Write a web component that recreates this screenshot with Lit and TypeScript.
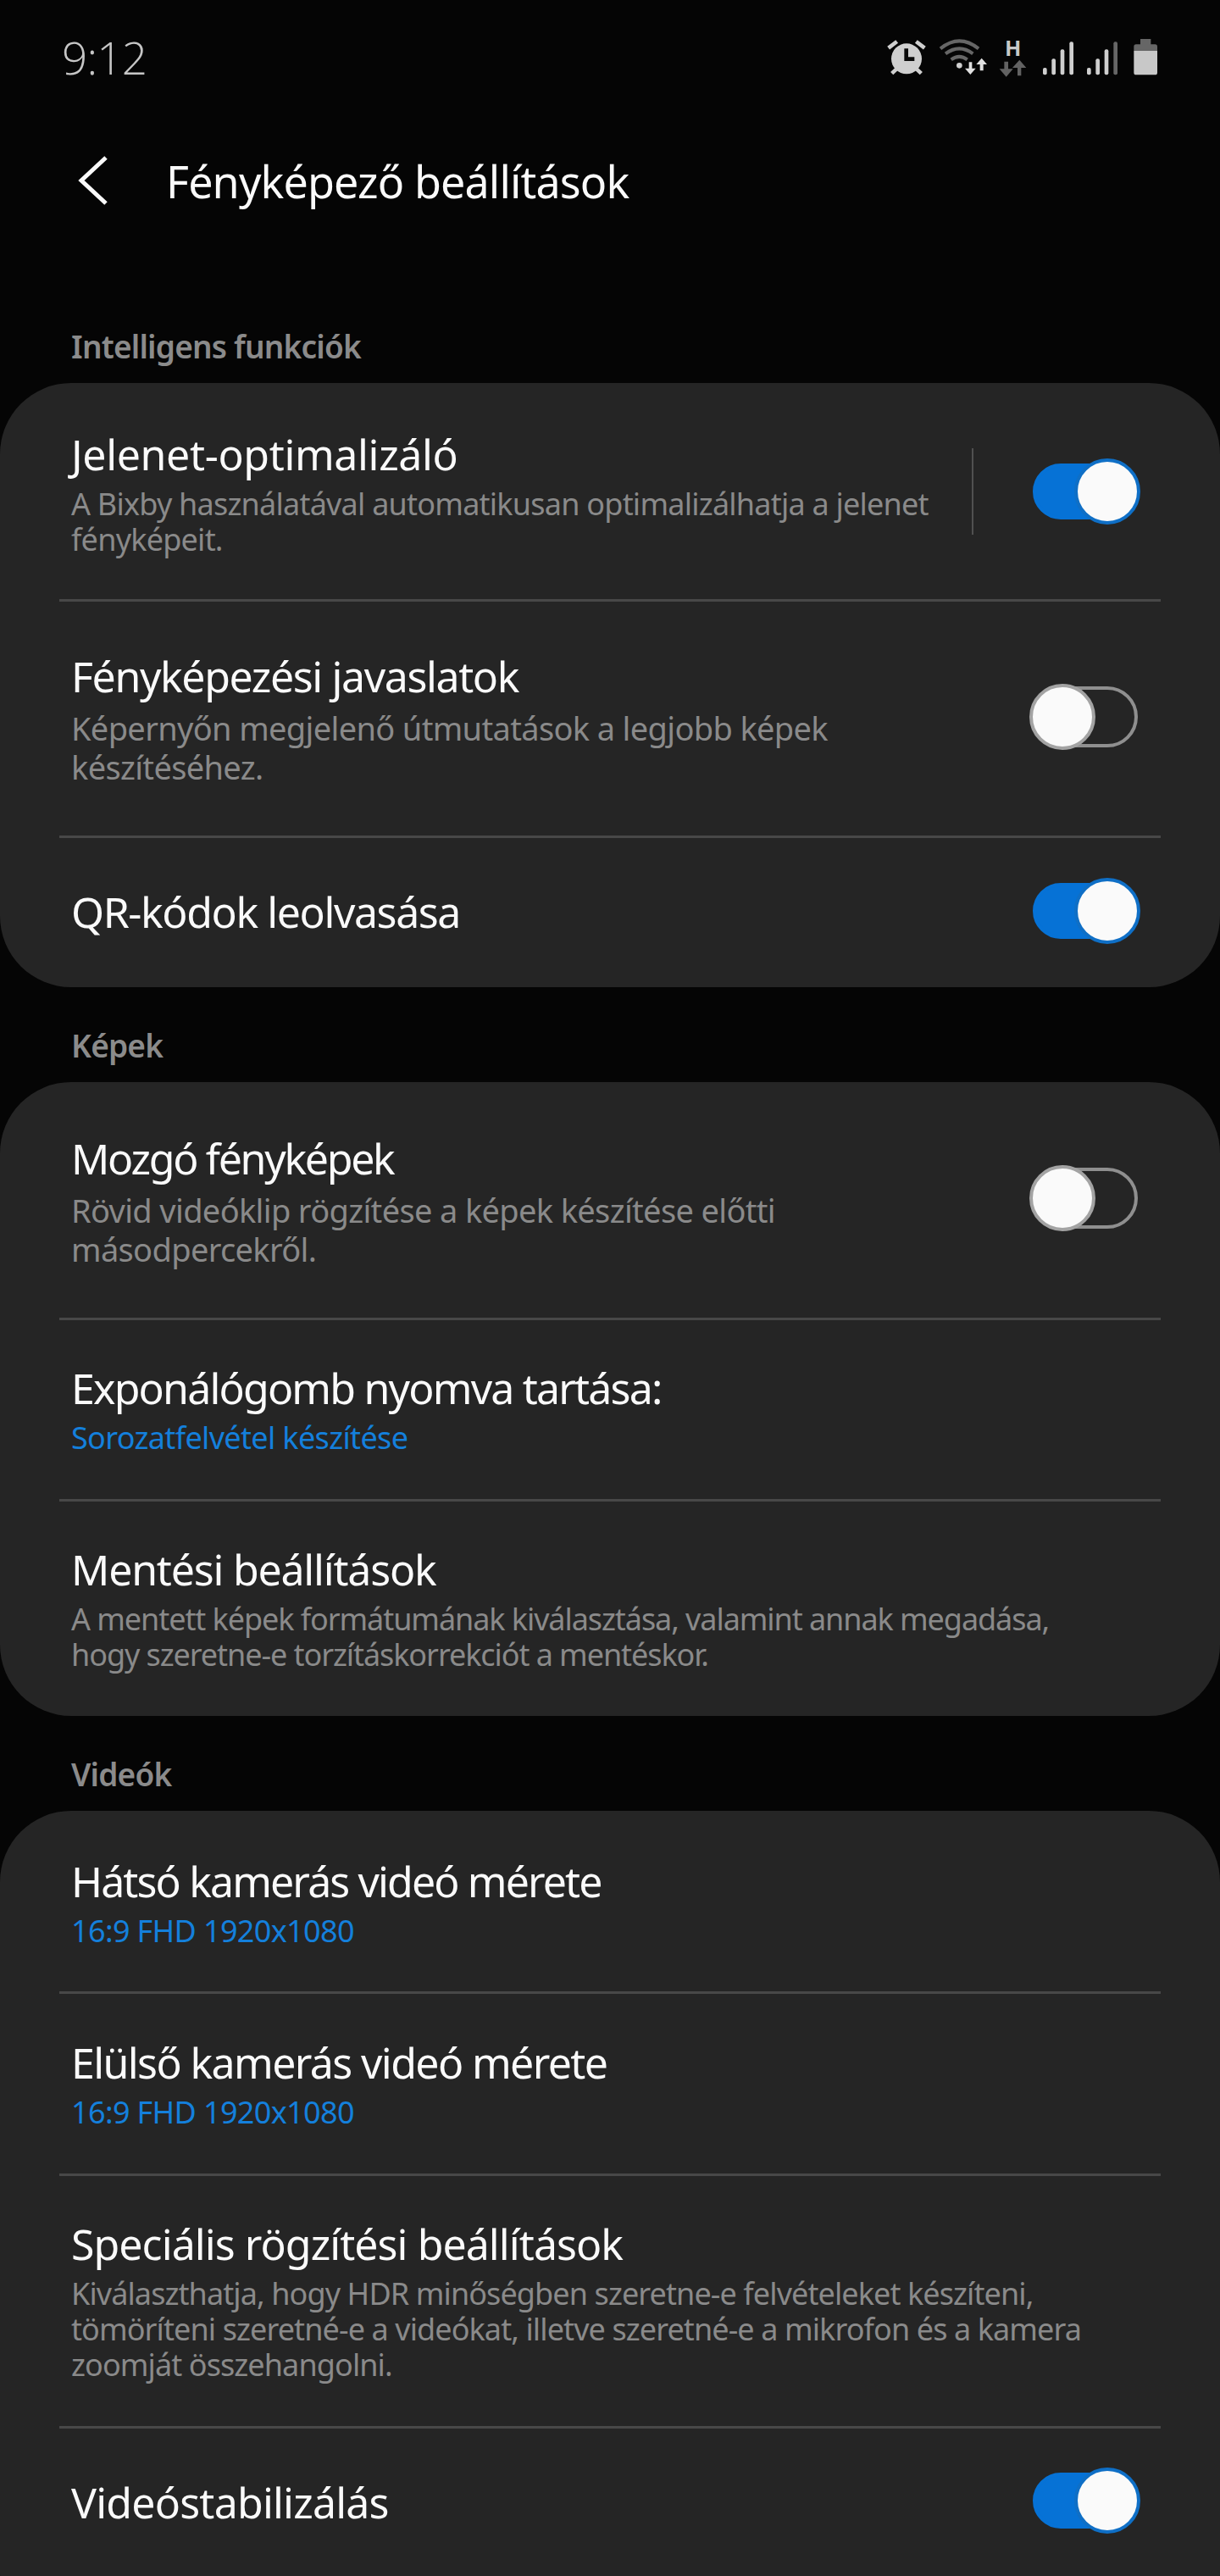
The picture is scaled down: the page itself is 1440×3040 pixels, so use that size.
import {customElement, property} from "lit/decorators.js";
import {css, html, LitElement, svg} from "lit";

@customElement('set-toggle')
class SetToggle extends LitElement {
    @property({ type: Boolean })
    on = false;

    static styles = css`
        :host {
            display: block;
            width: 132px;
            height: 78px;
        }
        .track {
            position: relative;
            width: 132px;
            height: 78px;
        }
        .bar {
            position: absolute;
            left: 2px;
            top: 3px;
            width: 126px;
            height: 72px;
            box-sizing: border-box;
            border-radius: 36px;
            border: 4px solid #8f8f8f;
        }
        .thumb {
            position: absolute;
            left: 0;
            top: 0;
            width: 78px;
            height: 78px;
            box-sizing: border-box;
            border-radius: 50%;
            background: #fafafa;
            border: 4px solid #a3a3a3;
        }
        .on .bar {
            left: 4px;
            top: 6px;
            width: 124px;
            height: 66px;
            border-radius: 33px;
            background: #0672d6;
            border-color: #0672d6;
        }
        .on .thumb {
            left: 53px;
            border-color: #0f6fc6;
        }
    `;

    render() {
        return html`<div class="track ${this.on ? "on" : ""}"><div class="bar"></div><div class="thumb"></div></div>`;
    }
}

type Row = {
    title: string;
    sub?: string;
    link?: string;
    big?: boolean;
    toggle?: boolean;
    sep?: boolean;
    h: number;
    pad: number;
    // letter spacing per text, the stand-in font is wider on some letters than the original
    ls: number;
    subLs?: number;
};

const groups: { label: string; rows: Row[] }[] = [
    {
        label: "Intelligens funkciók",
        rows: [
            { title: "Jelenet-optimalizáló", sub: "A Bixby használatával automatikusan optimalizálhatja a jelenet fényképeit.", toggle: true, sep: true, h: 255, pad: 54, ls: -0.35 },
            { title: "Fényképezési javaslatok", sub: "Képernyőn megjelenő útmutatások a legjobb képek készítéséhez.", big: true, toggle: false, h: 276, pad: 58, ls: -1.38 },
            { title: "QR-kódok leolvasása", toggle: true, h: 176, pad: 57, ls: -1.4 },
        ],
    },
    {
        label: "Képek",
        rows: [
            { title: "Mozgó fényképek", sub: "Rövid videóklip rögzítése a képek készítése előtti másodpercekről.", big: true, toggle: false, h: 278, pad: 60, ls: -2.3 },
            { title: "Exponálógomb nyomva tartása:", link: "Sorozatfelvétel készítése", h: 211, pad: 50, ls: -1.8 },
            { title: "Mentési beállítások", sub: "A mentett képek formátumának kiválasztása, valamint annak megadása, hogy szeretne-e torzításkorrekciót a mentéskor.", h: 253, pad: 50, ls: -1.2, subLs: -1.07 },
        ],
    },
    {
        label: "Videók",
        rows: [
            { title: "Hátsó kamerás videó mérete", link: "16:9 FHD 1920x1080", h: 213, pad: 53, ls: -1.87 },
            { title: "Elülső kamerás videó mérete", link: "16:9 FHD 1920x1080", h: 212, pad: 51, ls: -1.6 },
            { title: "Speciális rögzítési beállítások", sub: "Kiválaszthatja, hogy HDR minőségben szeretne-e felvételeket készíteni, tömöríteni szeretné-e a videókat, illetve szeretné-e a mikrofon és a kamera zoomját összehangolni.", h: 295, pad: 50, ls: -0.93, subLs: -0.9 },
            { title: "Videóstabilizálás", toggle: true, h: 174, pad: 57, ls: -0.78 },
        ],
    },
];

// drawn at 3x, the svg is shown at a third of its viewBox
const bars = (x: number, lastFill: string) => svg`
    <rect x=${x} y="180" width="14" height="25" rx="6" fill="#cfcfcf"/>
    <rect x=${x + 31} y="148" width="14" height="57" rx="6" fill="#cfcfcf"/>
    <rect x=${x + 62} y="115" width="14" height="90" rx="6" fill="#cfcfcf"/>
    <rect x=${x + 94} y="88" width="14" height="117" rx="6" fill=${lastFill}/>
`;

const statusIcons = svg`
    <circle cx="150" cy="148" r="54" fill="#cfcfcf"/>
    <path d="M142 112h14v30h22v14H142z" fill="#0a0a0a"/>
    <g stroke="#cfcfcf" stroke-width="14" fill="none">
        <path d="M86 110l30-23M214 110l-30-23M98 200l16-15M202 200l-16-15"/>
    </g>
    <g fill="none" stroke="#666" stroke-width="12">
        <path d="M270 112Q337 58 405 112"/>
        <path d="M288 130Q337 94 385 130"/>
        <path d="M308 151Q337 130 365 151"/>
    </g>
    <circle cx="337" cy="172" r="10" fill="#cfcfcf"/>
    <path d="M371 160h11v22h13l-19 22-19-22h14zM410 190v-22h-13l19-22 19 22h-13v22z" fill="#e0e0e0"/>
    <text x="527" y="137" font-family="'Noto Sans'" font-weight="700" font-size="76" fill="#c8c8c8" text-anchor="middle">H</text>
    <path d="M496 158h14v26h17l-24 28-24-28h17zM543 208v-28h-18l25-28 24 28h-18v28z" fill="#626262"/>
    ${bars(633, "#cfcfcf")}
    ${bars(789, "#666")}
    <path d="M955 105q0-8 8-8h15V78h37v19h15q8 0 8 8v15h-83z" fill="#666"/>
    <path d="M955 120h83v77q0 8-8 8h-67q-8 0-8-8z" fill="#c8c8c8"/>
`;

@customElement('app-root')
class AppRoot extends LitElement {
    static styles = css`
        :host {
            display: block;
            width: 1440px;
            height: 3040px;
            overflow: hidden;
            background: #050505;
            font-family: "Noto Sans", "Open Sans", sans-serif;
            color: #fafafa;
        }
        .status {
            height: 173px;
            display: flex;
            justify-content: space-between;
            align-items: flex-start;
            box-sizing: border-box;
            padding: 20px 0 0 73px;
        }
        .time {
            font-family: "Open Sans", sans-serif;
            font-weight: 300;
            font-size: 53px;
            line-height: 96px;
            color: #c6c6c6;
            letter-spacing: -0.8px;
        }
        .status svg {
            display: block;
            width: 420px;
            height: 90px;
        }
        .appbar {
            height: 80px;
            display: flex;
            align-items: center;
            padding-left: 90px;
            gap: 64px;
        }
        .appbar svg {
            width: 42px;
            height: 58px;
            display: block;
        }
        .appbar h1 {
            margin: 0;
            font-weight: 400;
            font-size: 52px;
            letter-spacing: -0.85px;
        }
        .groups {
            margin-top: 131px;
        }
        .label {
            font-size: 37px;
            font-weight: 600;
            color: #8b8b8b;
            line-height: 50px;
            padding: 0 0 18px 84px;
            letter-spacing: -0.8px;
        }
        .card {
            background: #252525;
            border-radius: 84px;
            margin-bottom: 44px;
            padding-bottom: 80px;
        }
        .card.closed {
            padding-bottom: 0;
        }
        .row {
            display: flex;
            align-items: flex-start;
            box-sizing: border-box;
            padding: 0 93px 0 84px;
        }
        .text {
            flex: 1;
            min-width: 0;
        }
        .hasToggle .copy {
            max-width: 1045px;
        }
        .title {
            font-size: 50px;
            line-height: 60px;
            color: #fafafa;
        }
        .sub {
            font-size: 36px;
            line-height: 42px;
            letter-spacing: -0.77px;
            color: #8a8a8a;
            margin-top: 8px;
            max-width: 1230px;
        }
        .sub.big {
            font-size: 38px;
            line-height: 46px;
            letter-spacing: -0.65px;
        }
        .link {
            font-size: 36px;
            line-height: 42px;
            letter-spacing: -0.65px;
            color: #1480dc;
            margin-top: 8px;
        }
        set-toggle {
            flex: none;
            align-self: center;
            margin-bottom: 4px;
        }
        .hasSep set-toggle {
            margin-bottom: 0;
        }
        .sep {
            flex: none;
            align-self: center;
            width: 2px;
            height: 102px;
            background: #505050;
            margin-right: 66px;
        }
        .divider {
            height: 3px;
            background: #484848;
            margin: 0 70px;
        }
    `;

    renderRow(r: Row, last: boolean) {
        return html`
            <div class="row ${r.toggle !== undefined ? "hasToggle" : ""} ${r.sep ? "hasSep" : ""}" style="height:${r.h}px">
                <div class="text" style="padding-top:${r.pad}px">
                    <div class="copy">
                        <div class="title" style="letter-spacing:${r.ls}px">${r.title}</div>
                        ${r.sub ? html`<div class="sub ${r.big ? "big" : ""}" style=${r.subLs ? `letter-spacing:${r.subLs}px` : ""}>${r.sub}</div>` : ""}
                        ${r.link ? html`<div class="link">${r.link}</div>` : ""}
                    </div>
                </div>
                ${r.sep ? html`<div class="sep"></div>` : ""}
                ${r.toggle !== undefined ? html`<set-toggle ?on=${r.toggle}></set-toggle>` : ""}
            </div>
            ${last ? "" : html`<div class="divider"></div>`}
        `;
    }

    render() {
        return html`
            <div class="status">
                <div class="time">9:12</div>
                <svg viewBox="0 0 1260 270">${statusIcons}</svg>
            </div>
            <div class="appbar">
                <svg viewBox="0 0 42 58"><path d="M35 2L6 29l29 27" fill="none" stroke="#fafafa" stroke-width="5"/></svg>
                <h1>Fényképező beállítások</h1>
            </div>
            <div class="groups">
                ${groups.map((g, gi) => html`
                    <div class="label">${g.label}</div>
                    <div class="card ${gi < groups.length - 1 ? "closed" : ""}">
                        ${g.rows.map((r, i) => this.renderRow(r, i === g.rows.length - 1))}
                    </div>
                `)}
            </div>
        `;
    }
}
